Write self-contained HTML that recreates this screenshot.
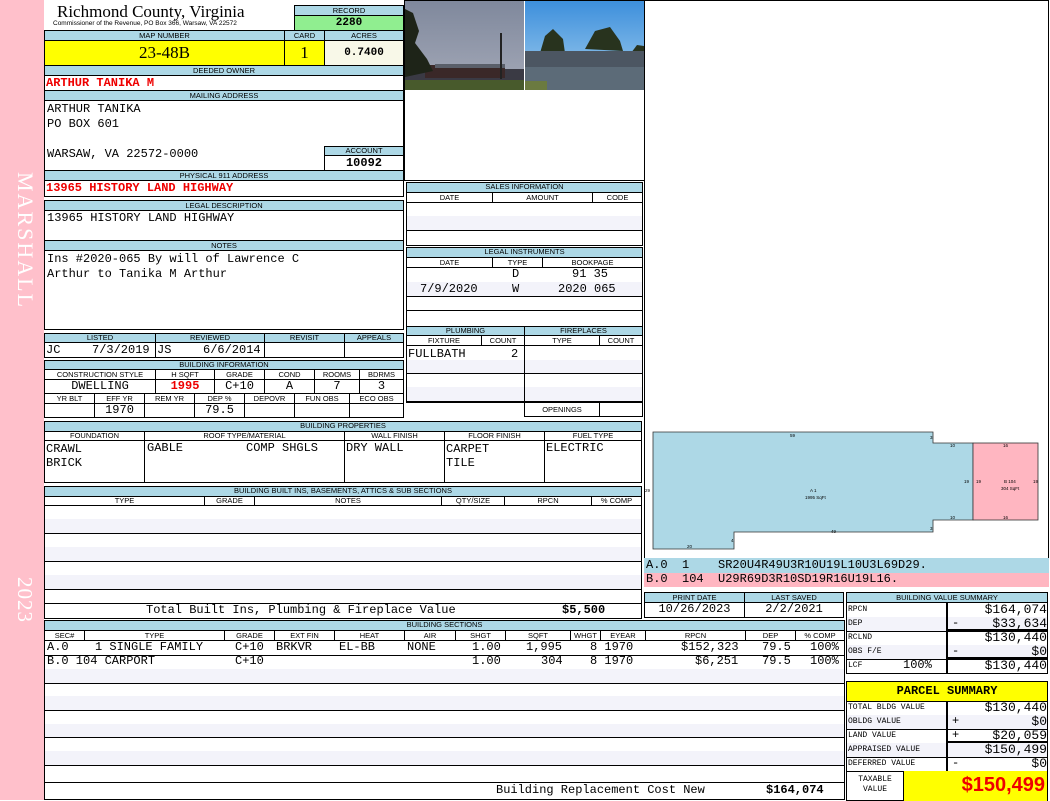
<!DOCTYPE html>
<html><head><meta charset="utf-8"><style>
*{box-sizing:border-box;margin:0;padding:0}
body{width:1050px;height:800px;position:relative;background:#fff;overflow:hidden;font-family:"Liberation Mono",monospace}
div{position:absolute}
.b{border:1px solid #000;background:#fff}
.h{background:#add8e6;border:1px solid #000;font:7.5px "Liberation Sans",sans-serif;text-align:center;line-height:8px;color:#000;white-space:nowrap;overflow:hidden}
.s{border:1px solid #000;font:7.5px "Liberation Sans",sans-serif;text-align:center;line-height:9px;background:#fff;white-space:nowrap}
.v{font:12px "Liberation Mono",monospace;white-space:nowrap;line-height:13px}
.alt{background:#f3f3fa}
.ln{border-bottom:1px solid #000;left:0;right:0}
</style></head><body>
<!-- pink strip -->
<div style="left:0;top:0;width:44px;height:800px;background:#ffc0cb"></div>
<div style="left:10px;top:172px;width:28px;height:162px;writing-mode:vertical-rl;color:#fff;font:22px 'Liberation Serif',serif;letter-spacing:2px">MARSHALL</div>
<div style="left:11px;top:577px;width:26px;height:54px;writing-mode:vertical-rl;color:#fff;font:21px 'Liberation Serif',serif;letter-spacing:1px">2023</div>

<!-- header -->
<div style="left:57px;top:2px;font:17px 'Liberation Serif',serif;line-height:20px">Richmond County, Virginia</div>
<div style="left:53px;top:20px;font:6.5px 'Liberation Sans',sans-serif">Commissioner of the Revenue, PO Box 366, Warsaw, VA 22572</div>
<div class="h" style="left:294px;top:5px;width:110px;height:11px;line-height:9px">RECORD</div>
<div style="left:294px;top:15px;width:110px;height:16px;background:#90ee90;border:1px solid #000;font:bold 11px 'Liberation Mono',monospace;text-align:center;line-height:14px">2280</div>
<div class="h" style="left:44px;top:30px;width:241px;height:11px;line-height:9px">MAP NUMBER</div>
<div class="h" style="left:284px;top:30px;width:41px;height:11px;line-height:9px">CARD</div>
<div class="h" style="left:324px;top:30px;width:80px;height:11px;line-height:9px">ACRES</div>
<div style="left:44px;top:40px;width:241px;height:26px;background:#ffff00;border:1px solid #000;font:17px 'Liberation Serif',serif;text-align:center;line-height:24px">23-48B</div>
<div style="left:284px;top:40px;width:41px;height:26px;background:#ffff00;border:1px solid #000;font:17px 'Liberation Serif',serif;text-align:center;line-height:24px">1</div>
<div style="left:324px;top:40px;width:80px;height:26px;background:#f8f8e8;border:1px solid #000;font:bold 11px 'Liberation Mono',monospace;text-align:center;line-height:24px">0.7400</div>
<div class="h" style="left:44px;top:65px;width:360px;height:11px;line-height:9px">DEEDED OWNER</div>
<div class="b" style="left:44px;top:75px;width:360px;height:16px"></div>
<div class="v" style="left:46px;top:77px;color:#e00;font-weight:bold">ARTHUR TANIKA M</div>
<div class="h" style="left:44px;top:90px;width:360px;height:11px;line-height:9px">MAILING ADDRESS</div>
<div class="b" style="left:44px;top:100px;width:360px;height:71px"></div>
<div class="v" style="left:47px;top:102px;line-height:15px">ARTHUR TANIKA<br>PO BOX 601<br><br>WARSAW, VA 22572-0000</div>
<div class="h" style="left:324px;top:146px;width:80px;height:10px;line-height:8px">ACCOUNT</div>
<div class="b" style="left:324px;top:155px;width:80px;height:16px;font:bold 12px 'Liberation Mono',monospace;text-align:center;line-height:14px">10092</div>
<div class="h" style="left:44px;top:170px;width:360px;height:11px;line-height:9px">PHYSICAL 911 ADDRESS</div>
<div class="b" style="left:44px;top:180px;width:360px;height:17px"></div>
<div class="v" style="left:46px;top:182px;color:#e00;font-weight:bold">13965 HISTORY LAND HIGHWAY</div>
<div class="h" style="left:44px;top:200px;width:360px;height:11px;line-height:9px">LEGAL DESCRIPTION</div>
<div class="b" style="left:44px;top:210px;width:360px;height:31px"></div>
<div class="v" style="left:47px;top:212px">13965 HISTORY LAND HIGHWAY</div>
<div class="h" style="left:44px;top:240px;width:360px;height:11px;line-height:9px">NOTES</div>
<div class="b" style="left:44px;top:250px;width:360px;height:80px"></div>
<div class="v" style="left:47px;top:252px;line-height:15px">Ins #2020-065 By will of Lawrence C<br>Arthur to Tanika M Arthur</div>

<!-- listed -->
<div class="h" style="left:44px;top:333px;width:112px;height:10px">LISTED</div>
<div class="h" style="left:155px;top:333px;width:110px;height:10px">REVIEWED</div>
<div class="h" style="left:264px;top:333px;width:81px;height:10px">REVISIT</div>
<div class="h" style="left:344px;top:333px;width:60px;height:10px">APPEALS</div>
<div class="b" style="left:44px;top:342px;width:112px;height:16px"></div>
<div class="b" style="left:155px;top:342px;width:110px;height:16px"></div>
<div class="b" style="left:264px;top:342px;width:81px;height:16px"></div>
<div class="b" style="left:344px;top:342px;width:60px;height:16px"></div>
<div class="v" style="left:46px;top:344px">JC</div><div class="v" style="left:92px;top:344px">7/3/2019</div>
<div class="v" style="left:157px;top:344px">JS</div><div class="v" style="left:203px;top:344px">6/6/2014</div>

<!-- building info -->
<div class="h" style="left:44px;top:360px;width:360px;height:10px">BUILDING INFORMATION</div>
<div class="s" style="left:44px;top:369px;width:112px;height:11px">CONSTRUCTION STYLE</div>
<div class="s" style="left:155px;top:369px;width:60px;height:11px">H SQFT</div>
<div class="s" style="left:214px;top:369px;width:51px;height:11px">GRADE</div>
<div class="s" style="left:264px;top:369px;width:51px;height:11px">COND</div>
<div class="s" style="left:314px;top:369px;width:46px;height:11px">ROOMS</div>
<div class="s" style="left:359px;top:369px;width:45px;height:11px">BDRMS</div>
<div class="b v" style="left:44px;top:379px;width:112px;height:15px;text-align:center">DWELLING</div>
<div class="b v" style="left:155px;top:379px;width:60px;height:15px;text-align:center;color:#e00;font-weight:bold">1995</div>
<div class="b v" style="left:214px;top:379px;width:51px;height:15px;text-align:center">C+10</div>
<div class="b v" style="left:264px;top:379px;width:51px;height:15px;text-align:center">A</div>
<div class="b v" style="left:314px;top:379px;width:46px;height:15px;text-align:center">7</div>
<div class="b v" style="left:359px;top:379px;width:45px;height:15px;text-align:center">3</div>
<div class="s" style="left:44px;top:393px;width:51px;height:11px">YR BLT</div>
<div class="s" style="left:94px;top:393px;width:51px;height:11px">EFF YR</div>
<div class="s" style="left:144px;top:393px;width:51px;height:11px">REM YR</div>
<div class="s" style="left:194px;top:393px;width:51px;height:11px">DEP %</div>
<div class="s" style="left:244px;top:393px;width:51px;height:11px">DEPOVR</div>
<div class="s" style="left:294px;top:393px;width:56px;height:11px">FUN OBS</div>
<div class="s" style="left:349px;top:393px;width:55px;height:11px">ECO OBS</div>
<div class="b" style="left:44px;top:403px;width:51px;height:15px"></div>
<div class="b v" style="left:94px;top:403px;width:51px;height:15px;text-align:center">1970</div>
<div class="b" style="left:144px;top:403px;width:51px;height:15px"></div>
<div class="b v" style="left:194px;top:403px;width:51px;height:15px;text-align:center">79.5</div>
<div class="b" style="left:244px;top:403px;width:51px;height:15px"></div>
<div class="b" style="left:294px;top:403px;width:56px;height:15px"></div>
<div class="b" style="left:349px;top:403px;width:55px;height:15px"></div>

<!-- building properties -->
<div class="h" style="left:44px;top:421px;width:598px;height:11px">BUILDING PROPERTIES</div>
<div class="s" style="left:44px;top:431px;width:101px;height:10px;line-height:8px">FOUNDATION</div>
<div class="s" style="left:144px;top:431px;width:201px;height:10px;line-height:8px">ROOF TYPE/MATERIAL</div>
<div class="s" style="left:344px;top:431px;width:101px;height:10px;line-height:8px">WALL FINISH</div>
<div class="s" style="left:444px;top:431px;width:101px;height:10px;line-height:8px">FLOOR FINISH</div>
<div class="s" style="left:544px;top:431px;width:98px;height:10px;line-height:8px">FUEL TYPE</div>
<div class="b" style="left:44px;top:440px;width:101px;height:43px"></div>
<div class="b" style="left:144px;top:440px;width:201px;height:43px"></div>
<div class="b" style="left:344px;top:440px;width:101px;height:43px"></div>
<div class="b" style="left:444px;top:440px;width:101px;height:43px"></div>
<div class="b" style="left:544px;top:440px;width:98px;height:43px"></div>
<div class="v" style="left:46px;top:442px;line-height:14px">CRAWL<br>BRICK</div>
<div class="v" style="left:147px;top:442px">GABLE</div>
<div class="v" style="left:246px;top:442px">COMP SHGLS</div>
<div class="v" style="left:346px;top:442px">DRY WALL</div>
<div class="v" style="left:446px;top:442px;line-height:14px">CARPET<br>TILE</div>
<div class="v" style="left:546px;top:442px">ELECTRIC</div>

<!-- built ins -->
<div class="h" style="left:44px;top:486px;width:598px;height:11px">BUILDING BUILT INS, BASEMENTS, ATTICS &amp; SUB SECTIONS</div>
<div class="s" style="left:44px;top:496px;width:161px;height:10px;line-height:8px">TYPE</div>
<div class="s" style="left:204px;top:496px;width:51px;height:10px;line-height:8px">GRADE</div>
<div class="s" style="left:254px;top:496px;width:188px;height:10px;line-height:8px">NOTES</div>
<div class="s" style="left:441px;top:496px;width:64px;height:10px;line-height:8px">QTY/SIZE</div>
<div class="s" style="left:504px;top:496px;width:88px;height:10px;line-height:8px">RPCN</div>
<div class="s" style="left:591px;top:496px;width:51px;height:10px;line-height:8px">% COMP</div>
<div class="b" style="left:44px;top:505px;width:598px;height:99px">
 <div class="ln" style="top:0;height:14px"></div>
 <div class="ln alt" style="top:13px;height:15px"></div>
 <div class="ln" style="top:27px;height:15px"></div>
 <div class="ln alt" style="top:41px;height:15px"></div>
 <div class="ln" style="top:55px;height:15px"></div>
 <div class="ln alt" style="top:69px;height:15px"></div>
</div>
<div class="b" style="left:44px;top:603px;width:598px;height:16px"></div>
<div class="v" style="left:146px;top:604px">Total Built Ins, Plumbing &amp; Fireplace Value</div>
<div class="v" style="left:562px;top:604px;font-weight:bold">$5,500</div>

<!-- photos -->
<div class="b" style="left:404px;top:0;width:241px;height:181px"></div>
<svg style="position:absolute;left:405px;top:1px" width="239" height="89">
<defs><linearGradient id="g1" x1="0" y1="0" x2="0" y2="1"><stop offset="0" stop-color="#7f889c"/><stop offset="1" stop-color="#a4a9b8"/></linearGradient>
<linearGradient id="g2" x1="0" y1="0" x2="0" y2="1"><stop offset="0" stop-color="#3d8fdc"/><stop offset="1" stop-color="#a3cfee"/></linearGradient></defs>
<rect x="0" y="0" width="119" height="89" fill="url(#g1)"/>
<rect x="0" y="78" width="119" height="11" fill="#485a2c"/>
<rect x="0" y="68" width="119" height="11" fill="#3a3a44"/>
<rect x="20" y="64" width="80" height="13" fill="#3a2828"/>
<rect x="30" y="63" width="70" height="4" fill="#5a5f6a"/>
<path d="M0 8 L8 12 L14 30 L10 42 L22 58 L28 70 L0 76Z" fill="#1e2418"/>
<rect x="95" y="32" width="2" height="46" fill="#222"/>
<rect x="120" y="0" width="119" height="89" fill="url(#g2)"/>
<path d="M135 52 L140 35 L148 28 L158 38 L160 52Z M180 48 L190 30 L205 26 L215 40 L218 50Z M226 52 L232 44 L239 45 L239 55Z" fill="#28331e"/>
<rect x="120" y="50" width="119" height="18" fill="#4c5662"/>
<rect x="120" y="66" width="119" height="23" fill="#5c6b78"/>
<rect x="120" y="80" width="22" height="9" fill="#6b7a40"/>
</svg>

<!-- sales -->
<div class="h" style="left:406px;top:182px;width:237px;height:11px">SALES INFORMATION</div>
<div class="s" style="left:406px;top:192px;width:87px;height:11px;line-height:9px">DATE</div>
<div class="s" style="left:492px;top:192px;width:101px;height:11px;line-height:9px">AMOUNT</div>
<div class="s" style="left:592px;top:192px;width:51px;height:11px;line-height:9px">CODE</div>
<div class="b" style="left:406px;top:202px;width:237px;height:44px">
 <div class="ln" style="top:0;height:14px"></div>
 <div class="ln alt" style="top:13px;height:15px"></div>
</div>
<div class="h" style="left:406px;top:247px;width:237px;height:11px">LEGAL INSTRUMENTS</div>
<div class="s" style="left:406px;top:257px;width:87px;height:11px;line-height:9px">DATE</div>
<div class="s" style="left:492px;top:257px;width:51px;height:11px;line-height:9px">TYPE</div>
<div class="s" style="left:542px;top:257px;width:101px;height:11px;line-height:9px">BOOKPAGE</div>
<div class="b" style="left:406px;top:267px;width:237px;height:62px">
 <div class="ln" style="top:0;height:15px"></div>
 <div class="ln alt" style="top:14px;height:15px"></div>
 <div class="ln" style="top:28px;height:15px"></div>
</div>
<div class="v" style="left:512px;top:268px">D</div><div class="v" style="left:572px;top:268px">91 35</div>
<div class="v" style="left:420px;top:283px">7/9/2020</div><div class="v" style="left:512px;top:283px">W</div><div class="v" style="left:558px;top:283px">2020 065</div>

<div class="h" style="left:406px;top:326px;width:119px;height:10px">PLUMBING</div>
<div class="h" style="left:524px;top:326px;width:119px;height:10px">FIREPLACES</div>
<div class="s" style="left:406px;top:335px;width:76px;height:11px;line-height:9px">FIXTURE</div>
<div class="s" style="left:481px;top:335px;width:44px;height:11px;line-height:9px">COUNT</div>
<div class="s" style="left:524px;top:335px;width:76px;height:11px;line-height:9px">TYPE</div>
<div class="s" style="left:599px;top:335px;width:44px;height:11px;line-height:9px">COUNT</div>
<div class="b" style="left:406px;top:345px;width:119px;height:58px">
 <div class="ln" style="top:0;height:15px"></div><div class="ln alt" style="top:14px;height:14px"></div><div class="ln" style="top:27px;height:15px"></div><div class="ln alt" style="top:41px;height:15px"></div></div>
<div class="b" style="left:524px;top:345px;width:119px;height:58px">
 <div class="ln" style="top:0;height:15px"></div><div class="ln alt" style="top:14px;height:14px"></div><div class="ln" style="top:27px;height:15px"></div><div class="ln alt" style="top:41px;height:15px"></div></div>
<div class="v" style="left:408px;top:348px">FULLBATH</div><div class="v" style="left:511px;top:348px">2</div>
<div class="s" style="left:524px;top:402px;width:76px;height:15px;line-height:13px">OPENINGS</div>
<div class="b" style="left:599px;top:402px;width:44px;height:15px"></div>

<!-- sketch panel -->
<div class="b" style="left:644px;top:0;width:405px;height:560px"></div>
<svg style="position:absolute;left:644px;top:420px" width="405" height="140" font-family="Liberation Sans" font-size="4.5" fill="#000">
<path d="M9 12 L289 12 L289 23 L329 23 L329 100 L289 100 L289 112 L90 112 L90 129 L9 129 Z" fill="#add8e6" stroke="#333" stroke-width="0.8"/>
<rect x="329" y="23" width="65" height="77" fill="#ffb6c1" stroke="#333" stroke-width="0.8"/>
<text x="146" y="17">59</text><text x="187" y="113">49</text><text x="1" y="72">29</text><text x="43" y="128">20</text><text x="87" y="122">4</text>
<text x="286" y="19">3</text><text x="286" y="110">3</text><text x="306" y="27">10</text><text x="306" y="99">10</text>
<text x="359" y="27">16</text><text x="359" y="99">16</text><text x="320" y="63">19</text><text x="332" y="63">19</text><text x="389" y="63">19</text>
<text x="166" y="72">A 1</text><text x="161" y="79">1995 SqFt</text><text x="360" y="63">B 104</text><text x="357" y="70">304 SqFt</text>
</svg>
<div style="left:644px;top:558px;width:405px;height:15px;background:#add8e6"></div>
<div style="left:644px;top:573px;width:405px;height:14px;background:#ffb6c1"></div>
<div class="v" style="left:646px;top:559px;font-size:12px">A.0&nbsp;&nbsp;1&nbsp;&nbsp;&nbsp;&nbsp;SR20U4R49U3R10U19L10U3L69D29.</div>
<div class="v" style="left:646px;top:573px;font-size:12px">B.0&nbsp;&nbsp;104&nbsp;&nbsp;U29R69D3R10SD19R16U19L16.</div>

<!-- print date -->
<div class="h" style="left:644px;top:592px;width:101px;height:11px;line-height:9px">PRINT DATE</div>
<div class="h" style="left:744px;top:592px;width:100px;height:11px;line-height:9px">LAST SAVED</div>
<div class="b v" style="left:644px;top:602px;width:101px;height:16px;text-align:center;font-size:12px">10/26/2023</div>
<div class="b v" style="left:744px;top:602px;width:100px;height:16px;text-align:center;font-size:12px">2/2/2021</div>

<!-- value summary -->
<div class="h" style="left:846px;top:592px;width:202px;height:11px;line-height:9px">BUILDING VALUE SUMMARY</div>
<div style="left:846px;top:602px;width:202px;height:72px;border:1px solid #000;font:10px 'Liberation Mono',monospace">
 <div style="left:0;top:0;width:101px;height:15px;border-right:2px solid #000;border-bottom:1px solid #000;font-size:8px;padding:2px 1px">RPCN</div>
 <div class="v" style="left:101px;top:0;width:99px;height:15px;border-bottom:1px solid #000;text-align:right;font-size:13px">$164,074</div>
 <div style="left:0;top:14px;width:101px;height:15px;border-right:2px solid #000;border-bottom:1px solid #000;font-size:8px;padding:2px 1px;background:#f3f3fa">DEP</div>
 <div class="v" style="left:101px;top:14px;width:99px;height:15px;border-bottom:3px solid #000;text-align:right;font-size:13px;background:#f3f3fa">$33,634</div>
 <div class="v" style="left:105px;top:14px;font-size:12px">-</div>
 <div style="left:0;top:28px;width:101px;height:15px;border-right:2px solid #000;border-bottom:1px solid #000;font-size:8px;padding:2px 1px">RCLND</div>
 <div class="v" style="left:101px;top:28px;width:99px;height:15px;border-bottom:1px solid #000;text-align:right;font-size:13px">$130,440</div>
 <div style="left:0;top:42px;width:101px;height:15px;border-right:2px solid #000;border-bottom:1px solid #000;font-size:8px;padding:2px 1px;background:#f3f3fa">OBS F/E</div>
 <div class="v" style="left:101px;top:42px;width:99px;height:15px;border-bottom:3px solid #000;text-align:right;font-size:13px;background:#f3f3fa">$0</div>
 <div class="v" style="left:105px;top:42px;font-size:12px">-</div>
 <div style="left:0;top:56px;width:101px;height:15px;border-right:2px solid #000;font-size:8px;padding:2px 1px">LCF</div>
 <div class="v" style="left:56px;top:56px;font-size:12px">100%</div>
 <div class="v" style="left:101px;top:56px;width:99px;height:15px;text-align:right;font-size:13px">$130,440</div>
</div>

<!-- parcel summary -->
<div style="left:846px;top:681px;width:202px;height:120px;border:1px solid #000;background:#fff">
 <div style="left:0;top:0;width:200px;height:20px;background:#ffff00;border-bottom:1px solid #000;font:bold 12px 'Liberation Mono',monospace;text-align:center;line-height:19px">PARCEL SUMMARY</div>
 <div style="left:0;top:19px;width:101px;height:15px;border-right:2px solid #000;border-bottom:1px solid #000;font-size:8px;padding:2px 1px">TOTAL BLDG VALUE</div>
 <div class="v" style="left:101px;top:19px;width:99px;height:15px;border-bottom:1px solid #000;text-align:right;font-size:13px">$130,440</div>
 <div style="left:0;top:33px;width:101px;height:15px;border-right:2px solid #000;border-bottom:1px solid #000;font-size:8px;padding:2px 1px;background:#f3f3fa">OBLDG VALUE</div>
 <div class="v" style="left:101px;top:33px;width:99px;height:15px;border-bottom:1px solid #000;text-align:right;font-size:13px;background:#f3f3fa">$0</div>
 <div class="v" style="left:105px;top:33px;font-size:12px">+</div>
 <div style="left:0;top:47px;width:101px;height:15px;border-right:2px solid #000;border-bottom:1px solid #000;font-size:8px;padding:2px 1px">LAND VALUE</div>
 <div class="v" style="left:101px;top:47px;width:99px;height:15px;border-bottom:3px solid #000;text-align:right;font-size:13px">$20,059</div>
 <div class="v" style="left:105px;top:47px;font-size:12px">+</div>
 <div style="left:0;top:61px;width:101px;height:15px;border-right:2px solid #000;border-bottom:1px solid #000;font-size:8px;padding:2px 1px;background:#f3f3fa">APPRAISED VALUE</div>
 <div class="v" style="left:101px;top:61px;width:99px;height:15px;border-bottom:1px solid #000;text-align:right;font-size:13px;background:#f3f3fa">$150,499</div>
 <div style="left:0;top:75px;width:101px;height:15px;border-right:2px solid #000;border-bottom:1px solid #000;font-size:8px;padding:2px 1px">DEFERRED VALUE</div>
 <div class="v" style="left:101px;top:75px;width:99px;height:15px;border-bottom:1px solid #000;text-align:right;font-size:13px">$0</div>
 <div class="v" style="left:105px;top:75px;font-size:12px">-</div>
 <div style="left:0;top:89px;width:56px;height:30px;font-size:8px;text-align:center;line-height:10px;padding-top:4px">TAXABLE<br>VALUE</div>
 <div style="left:56px;top:89px;width:144px;height:30px;background:#ffff00;border-left:1px solid #000;color:#e00;font:bold 20px 'Liberation Sans',sans-serif;text-align:right;line-height:28px;padding-right:2px">$150,499</div>
</div>

<!-- building sections -->
<div class="h" style="left:44px;top:620px;width:801px;height:11px;text-align:center">BUILDING SECTIONS</div>
<div class="s" style="left:44px;top:630px;width:41px;height:11px;line-height:9px">SEC#</div>
<div class="s" style="left:84px;top:630px;width:141px;height:11px;line-height:9px">TYPE</div>
<div class="s" style="left:224px;top:630px;width:51px;height:11px;line-height:9px">GRADE</div>
<div class="s" style="left:274px;top:630px;width:61px;height:11px;line-height:9px">EXT FIN</div>
<div class="s" style="left:334px;top:630px;width:71px;height:11px;line-height:9px">HEAT</div>
<div class="s" style="left:404px;top:630px;width:52px;height:11px;line-height:9px">AIR</div>
<div class="s" style="left:455px;top:630px;width:51px;height:11px;line-height:9px">SHGT</div>
<div class="s" style="left:505px;top:630px;width:66px;height:11px;line-height:9px">SQFT</div>
<div class="s" style="left:570px;top:630px;width:31px;height:11px;line-height:9px">WHGT</div>
<div class="s" style="left:600px;top:630px;width:46px;height:11px;line-height:9px">EYEAR</div>
<div class="s" style="left:645px;top:630px;width:101px;height:11px;line-height:9px">RPCN</div>
<div class="s" style="left:745px;top:630px;width:51px;height:11px;line-height:9px">DEP</div>
<div class="s" style="left:795px;top:630px;width:50px;height:11px;line-height:9px">% COMP</div>
<div class="b" style="left:44px;top:640px;width:801px;height:143px">
 <div class="ln" style="top:0;height:15px"></div>
 <div class="ln" style="top:14px;height:15px"></div>
 <div class="ln alt" style="top:28px;height:15px"></div>
 <div class="ln" style="top:42px;height:14px"></div>
 <div class="ln alt" style="top:55px;height:15px"></div>
 <div class="ln" style="top:69px;height:15px"></div>
 <div class="ln alt" style="top:83px;height:14px"></div>
 <div class="ln" style="top:96px;height:15px"></div>
 <div class="ln alt" style="top:110px;height:15px"></div>
</div>
<div class="v" style="left:47px;top:641px">A.0</div><div class="v" style="left:95px;top:641px">1 SINGLE FAMILY</div>
<div class="v" style="left:235px;top:641px">C+10</div><div class="v" style="left:276px;top:641px">BRKVR</div>
<div class="v" style="left:339px;top:641px">EL-BB</div><div class="v" style="left:407px;top:641px">NONE</div>
<div class="v" style="left:472px;top:641px">1.00</div><div class="v" style="left:526px;top:641px">1,995</div>
<div class="v" style="left:590px;top:641px">8 1970</div><div class="v" style="left:681px;top:641px">$152,323</div>
<div class="v" style="left:762px;top:641px">79.5</div><div class="v" style="left:810px;top:641px">100%</div>
<div class="v" style="left:47px;top:655px">B.0 104 CARPORT</div><div class="v" style="left:235px;top:655px">C+10</div>
<div class="v" style="left:472px;top:655px">1.00</div><div class="v" style="left:541px;top:655px">304</div>
<div class="v" style="left:590px;top:655px">8 1970</div><div class="v" style="left:695px;top:655px">$6,251</div>
<div class="v" style="left:762px;top:655px">79.5</div><div class="v" style="left:810px;top:655px">100%</div>
<div class="b" style="left:44px;top:782px;width:801px;height:18px"></div>
<div class="v" style="left:496px;top:784px">Building Replacement Cost New</div>
<div class="v" style="left:766px;top:784px;font-weight:bold">$164,074</div>
</body></html>
